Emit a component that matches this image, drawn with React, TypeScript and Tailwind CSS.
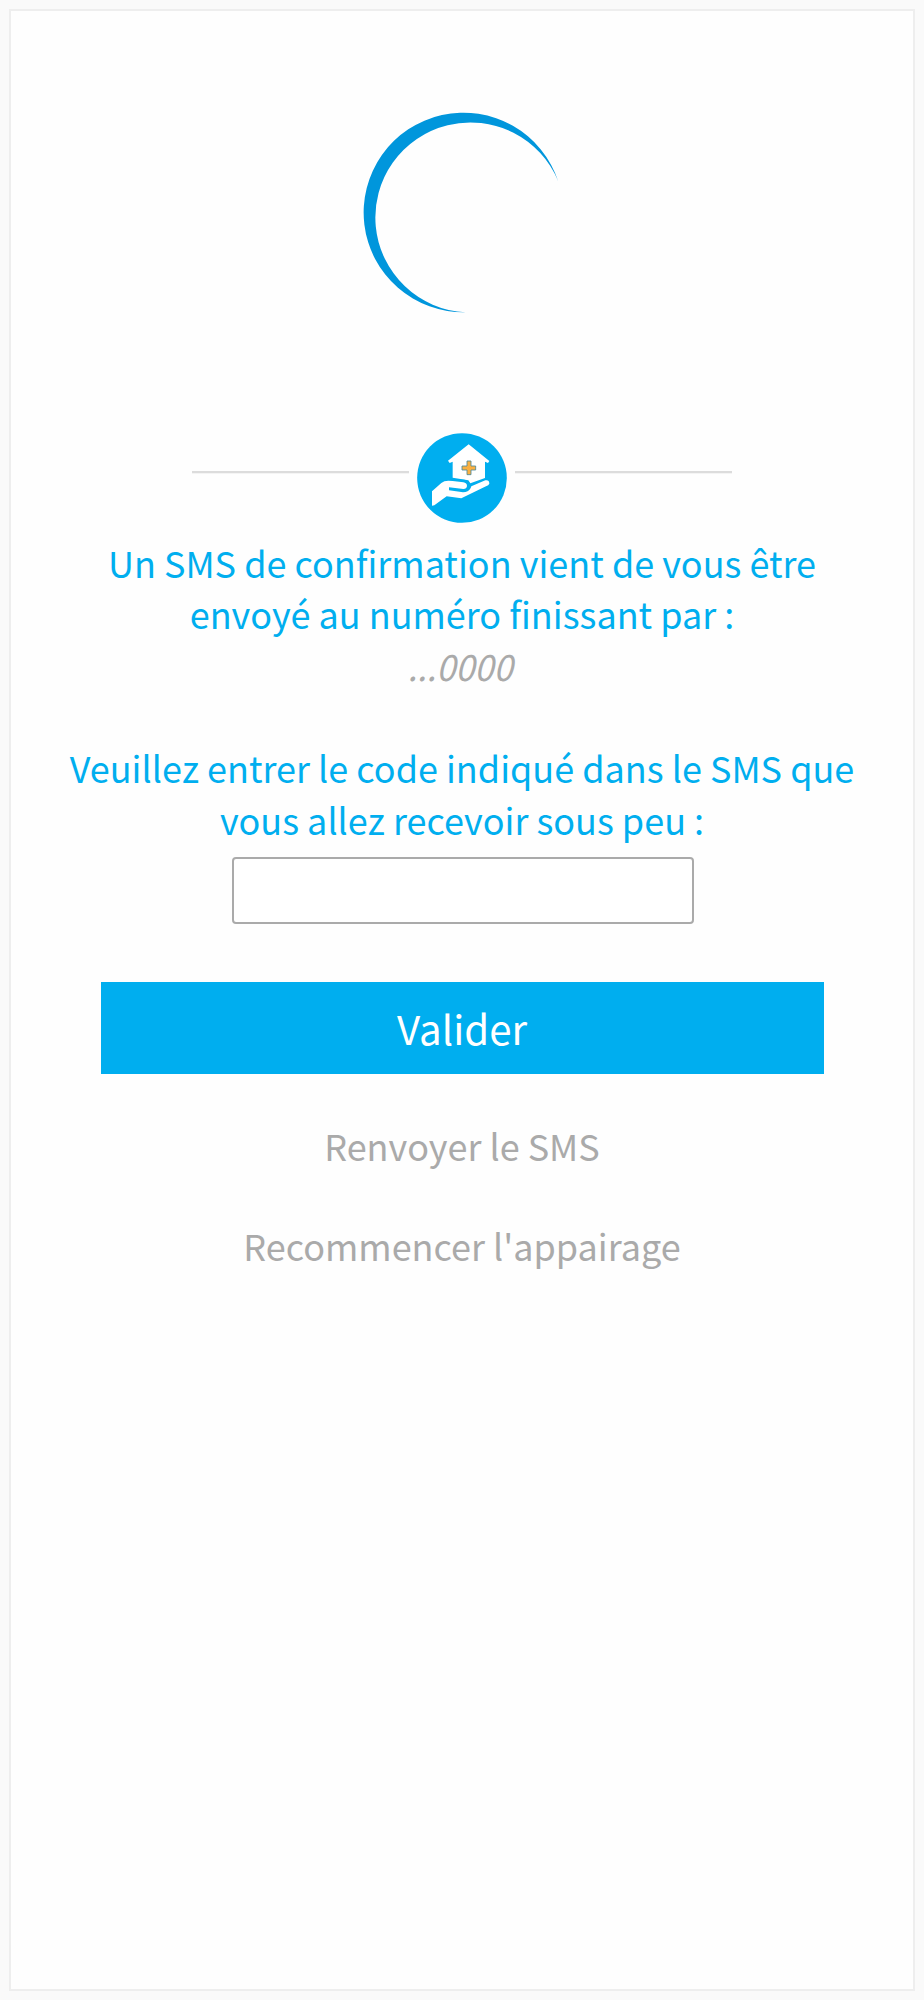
function Spinner() {
  return (
    <svg className="h-[202px] w-[200px]" viewBox="361.5 111 200 202" role="img" aria-label="Chargement">
      <path d="M465 312.3 A99.8 99.8 0 1 1 557.8 181.5 A95 95 0 1 0 465 312.3 Z" fill="#0096dc" />
    </svg>
  )
}

function HomeCareBadge() {
  return (
    <svg className="h-[90px] w-[90px] shrink-0" viewBox="45 38 270 270" aria-hidden="true">
      <circle cx="180" cy="173" r="134.5" fill="#00aeef" />
      <path d="M200 72 L262 122 L258 128 L249 124 V173 L205 189 L199 180 L152 172 V124 L143 128 L138 121 Z" fill="#fff" />
      <path d="M138 181 L186 182 Q201 185 201 197" fill="none" stroke="#00aeef" strokeWidth="8" />
      <path d="M90 213 L118 188 Q126 181 139 181 L152 182 L184 186 Q195 188 195 197 Q194 206 184 206 L141 201 V210 L183 216 Q199 216 206 203 L208 198 L250 180 Q262 178 262 190 Q260 195 252 198 L178 234 L134 228 L97 255 L90 256 Z" fill="#fff" />
      <path d="M195 122 H207 V137 H221 V149 H207 V163 H195 V149 H180 V137 H195 Z" fill="#fbb040" stroke="#4a8799" strokeWidth="2.5" />
    </svg>
  )
}

function Rule() {
  return <span className="mt-[38px] h-[3px] w-[217px] border-b border-[#f4f4f4] bg-[#dcdcdc]" />
}

export default function App() {
  return (
    <div className="flex h-[2000px] w-[924px] bg-[#fafafa] p-[9px] font-['Noto_Sans_CJK_JP','Noto_Sans',sans-serif] text-[#00aeef]">
      <main className="flex h-[1982px] w-[906px] flex-col items-center border-2 border-[#eee] bg-[#fefefe] pt-[100px]">
        <Spinner />
        <div className="mt-[120px] flex w-[540px] justify-between">
          <Rule />
          <HomeCareBadge />
          <Rule />
        </div>
        <p className="mt-[14px] text-center text-[36px] leading-[51.4px]">
          Un SMS de confirmation vient de vous être
          <br />
          envoyé au numéro finissant par :
        </p>
        <em className="mr-[4px] block scale-x-[0.955] text-[36px] leading-[51.4px] text-[#aaa]">...0000</em>
        <label htmlFor="code" className="mt-[51.2px] text-center text-[36px] leading-[51.4px]">
          Veuillez entrer le code indiqué dans le SMS que
          <br />
          vous allez recevoir sous peu :
        </label>
        <input
          id="code"
          className="mt-[11.8px] ml-[2px] h-[67px] w-[462px] shrink-0 rounded-[4px] border-2 border-[#aaa] bg-white px-3 text-[36px] outline-none"
        />
        <button className="mt-[58px] h-[92px] w-[723px] shrink-0 bg-[#00aeef] text-[40.2px] leading-none text-white">
          Valider
        </button>
        <a className="mt-[45.9px] text-[36px] leading-[51.4px] text-[#aaa]">Renvoyer le SMS</a>
        <a className="mt-[48.6px] text-[36px] leading-[51.4px] text-[#aaa]">Recommencer l'appairage</a>
      </main>
    </div>
  )
}
